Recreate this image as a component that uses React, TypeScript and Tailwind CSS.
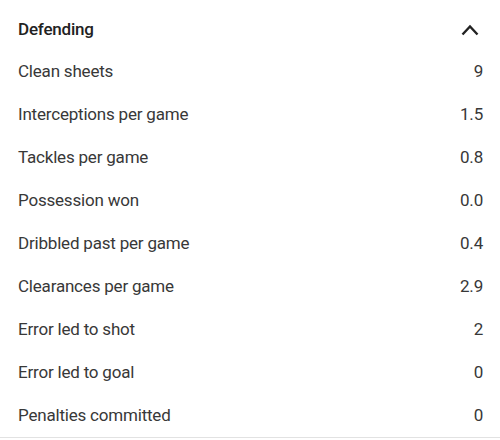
import React from "react";

const rows: [string, string][] = [
  ["Clean sheets", "9"],
  ["Interceptions per game", "1.5"],
  ["Tackles per game", "0.8"],
  ["Possession won", "0.0"],
  ["Dribbled past per game", "0.4"],
  ["Clearances per game", "2.9"],
  ["Error led to shot", "2"],
  ["Error led to goal", "0"],
  ["Penalties committed", "0"],
];

const App: React.FC = () => {
  return (
    <div className="w-[500px] h-[440px] bg-white font-['Roboto',sans-serif] text-[#383838]">
      <div className="pt-[9px] border-b border-[#e2e2e2]">
        {/* header */}
        <div className="h-[41px] flex items-center justify-between pl-[18px] pr-[21px]">
          <span className="text-[17px] tracking-[-0.2px] font-medium text-[#222]">Defending</span>
          <svg width="18" height="12" viewBox="0 0 18 12" fill="none">
            <path d="M1.5 10.5 L9 2.5 L16.5 10.5" stroke="#222" strokeWidth="2.4" />
          </svg>
        </div>

        {rows.map(([label, value]) => (
          <div key={label} className="h-[43px] flex items-center justify-between pl-[18px] pr-[17px] text-[17px] tracking-[-0.2px]">
            <span>{label}</span>
            <span>{value}</span>
          </div>
        ))}
      </div>
    </div>
  );
};

export default App;
